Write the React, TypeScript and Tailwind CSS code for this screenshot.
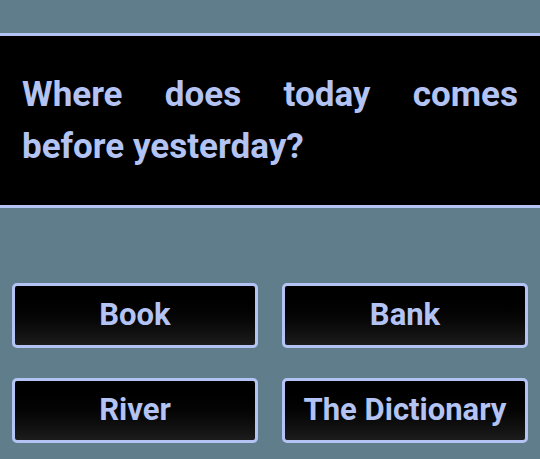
import React from "react";

const options = ["Book", "Bank", "River", "The Dictionary"];

export default function App() {
  return (
    <div
      className="w-[540px] h-[459px] bg-[#607d8b] overflow-hidden"
      style={{ fontFamily: "Roboto, 'Noto Sans', sans-serif" }}
    >
      <div className="pt-[33px]">
        <div className="bg-black border-y-[3px] border-[#b3c3f3] h-[175px] px-[22px] pt-[33px]">
          <p className="text-[#b3c3f3] text-[35px] font-bold leading-[52px] text-justify">
            Where does today comes before yesterday?
          </p>
        </div>
      </div>
      <div className="grid grid-cols-2 gap-x-[24px] gap-y-[30px] px-[12px] pt-[75px]">
        {options.map((o) => (
          <button
            key={o}
            className="h-[65px] rounded-[5px] border-[3px] border-[#b3c3f3] bg-gradient-to-b from-black to-[#1c1c1c] text-[#b3c3f3] text-[31px] font-bold flex items-center justify-center"
          >
            {o}
          </button>
        ))}
      </div>
    </div>
  );
}
